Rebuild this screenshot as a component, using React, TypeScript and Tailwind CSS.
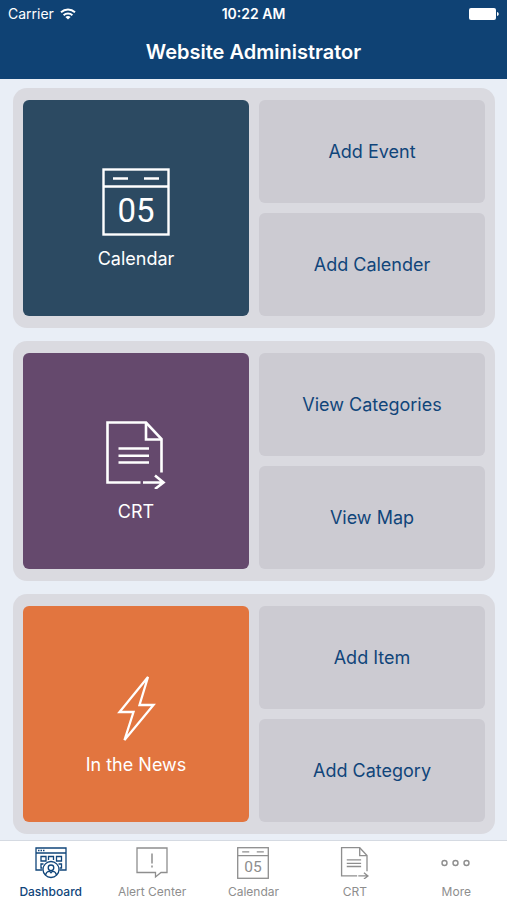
import type { ReactNode } from "react";

interface Section {
  name: string;
  color: string;
  icon: ReactNode;
  actions: string[];
}

interface Tab {
  name: string;
  icon: ReactNode;
}

function CalendarIcon({ size, stroke }: { size: number; stroke: number }) {
  return (
    <svg width={size} height={size} viewBox="0 0 68 68" fill="none" stroke="currentColor" strokeWidth={stroke} aria-hidden="true">
      <rect x="1.5" y="1.5" width="65" height="65" />
      <path d="M1.5 18.5H66.5M11 10.5H26M42 10.5H57" />
      <text x="34" y="54" fontSize="33" textAnchor="middle" fill="currentColor" stroke="none" fontFamily="Roboto, sans-serif">
        05
      </text>
    </svg>
  );
}

function DocumentIcon({ size, stroke }: { size: number; stroke: number }) {
  return (
    <svg width={size} height={size} viewBox="0 0 68 68" fill="none" stroke="currentColor" strokeWidth={stroke} aria-hidden="true">
      <path d="M38.5 61.5H5.5V1.5H44L59.5 18V51.5" />
      <path d="M44 1.5V18.5H59.5" />
      <path d="M16.5 27.5H47M16.5 34.8H47M16.5 41.5H47" />
      <path d="M41 61.5H61.5M53 54.5L61.5 61.5L53 68" />
    </svg>
  );
}

function BoltIcon() {
  return (
    <svg className="overflow-visible" width="68" height="68" viewBox="0 0 68 68" fill="none" stroke="currentColor" strokeWidth="2.3" aria-hidden="true">
      <path d="M46 3L17.5 38H31.5L22.5 66L51.5 31H37.5Z" />
    </svg>
  );
}

function DashboardIcon() {
  return (
    <svg width="32" height="32" viewBox="0 0 32 32" fill="none" stroke="currentColor" strokeWidth="1.3" aria-hidden="true">
      <path d="M7.5 23H1V1H31V23H24.5" />
      <path d="M1 6H31M3 3.5H4.5M5.5 3.5H7M8 3.5H9.5" />
      <path d="M6 9.5H11V14H6ZM13.5 13V9.5H18.5V13M21.5 9.5H26.5V14H21.5Z" />
      <path d="M8.5 17H6V21H7.5M23.5 17H26.5V21H24.5" />
      <circle cx="16" cy="22.5" r="8" />
      <circle cx="16" cy="20.8" r="2.8" />
      <path d="M10.5 28C11 25.5 13 24.5 14.5 24.2L16 25.8L17.5 24.2C19 24.5 21 25.5 21.5 28" />
    </svg>
  );
}

function AlertIcon() {
  return (
    <svg width="32" height="32" viewBox="0 0 32 32" fill="none" stroke="currentColor" strokeWidth="1.3" aria-hidden="true">
      <path d="M1 1H31V25.5H25L19.5 30V25.5H1Z" />
      <path d="M16 6.5V16.5M16 18.5V20.5" strokeWidth="1.5" />
    </svg>
  );
}

function MoreIcon() {
  return (
    <svg width="32" height="32" viewBox="0 0 32 32" fill="none" stroke="currentColor" strokeWidth="1.4" aria-hidden="true">
      <circle cx="4.5" cy="16" r="2.5" />
      <circle cx="15.5" cy="16" r="2.5" />
      <circle cx="26.5" cy="16" r="2.5" />
    </svg>
  );
}

function WifiIcon() {
  return (
    <svg width="16" height="12" viewBox="0 0 16 12" fill="none" stroke="currentColor" strokeWidth="1.9" aria-hidden="true">
      <path d="M1 4.3C5 0.6 11 0.6 15 4.3" />
      <path d="M3.6 7.2C6 4.9 10 4.9 12.4 7.2" />
      <path d="M8 11.6L5.4 9C6.8 7.7 9.2 7.7 10.6 9Z" fill="currentColor" stroke="none" />
    </svg>
  );
}

function BatteryIcon() {
  return (
    <svg width="30" height="12" viewBox="0 0 30 12" fill="currentColor" aria-hidden="true">
      <rect width="27" height="12" rx="2" />
      <path d="M28 4C30.3 4.6 30.3 7.4 28 8Z" />
    </svg>
  );
}

const sections: Section[] = [
  {
    name: "Calendar",
    color: "bg-[#2c4a62]",
    icon: <CalendarIcon size={68} stroke={2.4} />,
    actions: ["Add Event", "Add Calender"],
  },
  {
    name: "CRT",
    color: "bg-[#65496d]",
    icon: <DocumentIcon size={68} stroke={2.6} />,
    actions: ["View Categories", "View Map"],
  },
  {
    name: "In the News",
    color: "bg-[#e2753f]",
    icon: <BoltIcon />,
    actions: ["Add Item", "Add Category"],
  },
];

const tabs: Tab[] = [
  { name: "Dashboard", icon: <DashboardIcon /> },
  { name: "Alert Center", icon: <AlertIcon /> },
  { name: "Calendar", icon: <CalendarIcon size={32} stroke={2.8} /> },
  { name: "CRT", icon: <DocumentIcon size={32} stroke={2.8} /> },
  { name: "More", icon: <MoreIcon /> },
];

function SectionCard({ section }: { section: Section }) {
  return (
    <section className="grid grid-cols-2 gap-[10px] rounded-[14px] bg-[#dadae0] px-[10px] py-3">
      <button className={`flex h-[216px] flex-col items-center gap-[11px] rounded-md pt-[68px] text-white ${section.color}`}>
        {section.icon}
        <span className="text-lg leading-6">{section.name}</span>
      </button>
      <div className="grid grid-rows-2 gap-[10px]">
        {section.actions.map((action) => (
          <button key={action} className="rounded-md bg-[#cccbd2] text-lg text-[#10457a]">
            {action}
          </button>
        ))}
      </div>
    </section>
  );
}

export default function App() {
  return (
    <div className="flex min-h-screen flex-col bg-[#e9eef6] font-['Inter',sans-serif]">
      <header className="h-[79px] bg-[#0f4274] text-white">
        {/* Status bar */}
        <div className="grid grid-cols-3 items-center px-2 pt-1 text-sm leading-5">
          <div className="flex items-center gap-[6px]">
            <span>Carrier</span>
            <WifiIcon />
          </div>
          <span className="text-center font-semibold">10:22 AM</span>
          <div className="flex justify-end">
            <BatteryIcon />
          </div>
        </div>
        <h1 className="pt-[14px] text-center text-xl leading-7 font-semibold">Website Administrator</h1>
      </header>

      <main className="flex flex-1 flex-col gap-[13px] pt-[9px] pr-3 pb-[6px] pl-[13px]">
        {sections.map((section) => (
          <SectionCard key={section.name} section={section} />
        ))}
      </main>

      {/* Bottom tabs */}
      <nav className="grid h-[60px] grid-cols-5 border-t border-[#d5dae2] bg-white">
        {tabs.map((tab, i) => (
          <button
            key={tab.name}
            className={i === 0 ? "flex flex-col items-center pt-[6px] text-[#10457a]" : "flex flex-col items-center pt-[6px] text-[#8e8e8e]"}
          >
            {tab.icon}
            <span className={i === 0 ? "pt-[5px] text-xs font-medium" : "pt-[5px] text-xs"}>{tab.name}</span>
          </button>
        ))}
      </nav>
    </div>
  );
}
